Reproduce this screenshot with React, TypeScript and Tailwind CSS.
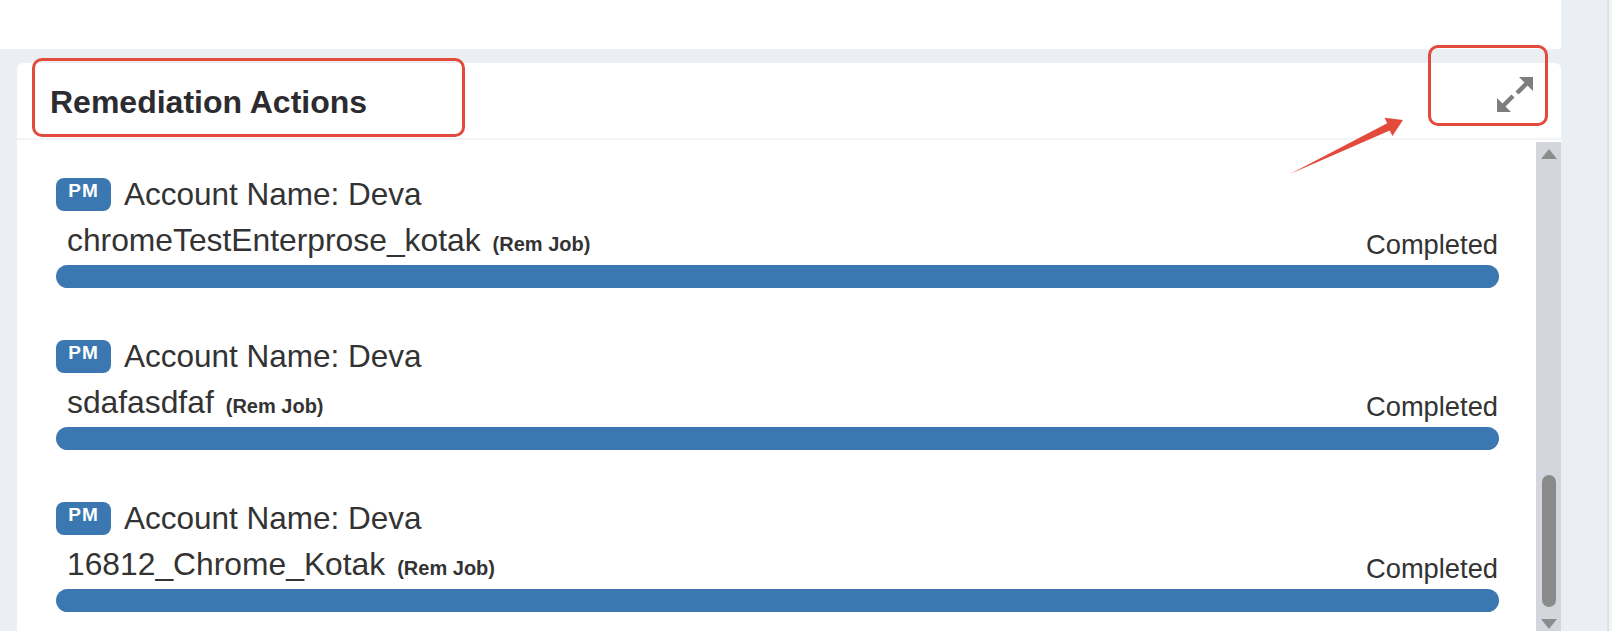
import React from "react";

const items = [
  { name: "chromeTestEnterprose_kotak" },
  { name: "sdafasdfaf" },
  { name: "16812_Chrome_Kotak" },
];

function ExpandIcon() {
  return (
    <svg width="36" height="35" viewBox="0 0 36 35" className="block">
      <polygon points="36,0 36,14 22,0" fill="#7d7d7d" />
      <line x1="30" y1="6" x2="20" y2="16" stroke="#7d7d7d" strokeWidth="4.5" />
      <polygon points="0,35 0,21 14,35" fill="#7d7d7d" />
      <line x1="6" y1="29" x2="16" y2="19" stroke="#7d7d7d" strokeWidth="4.5" />
    </svg>
  );
}

function Item({ name }: { name: string }) {
  return (
    <div className="flex flex-col">
      <div className="flex items-start h-[33px]">
        <div className="w-[55px] h-[33px] rounded-[8px] bg-[#3b78b1] text-white font-bold text-[19px] leading-[19px] pt-[3px] text-center tracking-[1px]">
          PM
        </div>
        <div className="ml-[13px] text-[31.5px] leading-[33px] text-[#333]">
          Account Name: Deva
        </div>
      </div>
      <div className="mt-[11px] flex justify-between h-[36px]">
        <div className="pl-[11px] text-[31.8px] leading-[36px] text-[#333] whitespace-nowrap">
          {name}
          <span className="ml-[12px] text-[20px] font-bold">(Rem Job)</span>
        </div>
        <div className="self-end text-[27.3px] leading-[27px] text-[#333] pr-[1px]">
          Completed
        </div>
      </div>
      <div className="mt-[7px] h-[23px] rounded-full bg-[#3b78b1]" />
    </div>
  );
}

export default function App() {
  return (
    <div
      className="relative w-[1612px] h-[631px] overflow-hidden bg-[#ebeef3] flex"
      style={{ fontFamily: '"Liberation Sans", Arial, sans-serif' }}
    >
      <div className="w-[1561px] flex flex-col">
        <div className="h-[49px] bg-white shrink-0" />
        <div className="h-[14px] shrink-0" />
        <div className="ml-[17px] flex-1 min-h-0 bg-white rounded-t-[6px] flex flex-col">
          <div className="h-[77px] shrink-0 border-b-2 border-[#f2f3f5] flex justify-between items-start">
            <div className="mt-[21px] pl-[33px] text-[32px] leading-[37px] font-bold text-[#2b2b30]">
              Remediation Actions
            </div>
            <div className="mt-[14px] mr-[28px]">
              <ExpandIcon />
            </div>
          </div>
          <div className="flex flex-1 min-h-0">
            <div className="flex-1 pl-[39px] pr-[37px] pt-[38px] overflow-hidden flex flex-col gap-[52px]">
              {items.map((it) => (
                <Item key={it.name} name={it.name} />
              ))}
            </div>
            <div className="w-[25px] mt-[2px] bg-[#d3d6dd] flex flex-col items-center pt-[7px] pb-[2px]">
              <div className="w-0 h-0 border-l-[8px] border-r-[8px] border-b-[10px] border-l-transparent border-r-transparent border-b-[#8c8c8c]" />
              <div className="mt-auto h-[132px] w-[14px] rounded-full bg-[#8a8a8a]" />
              <div className="mt-[12px] w-0 h-0 border-l-[8px] border-r-[8px] border-t-[10px] border-l-transparent border-r-transparent border-t-[#8c8c8c]" />
            </div>
          </div>
        </div>
      </div>
      <div className="w-[46px] bg-[#ebeef3]" />
      <div className="w-[2px] bg-[#dde0e6]" />
      <div className="flex-1 bg-[#f1f3f7]" />

      {/* annotations */}
      <div className="absolute left-[32px] top-[58px] w-[433px] h-[79px] border-[3px] border-[#e24b3b] rounded-[10px] pointer-events-none" />
      <div className="absolute left-[1428px] top-[45px] w-[120px] h-[81px] border-[3px] border-[#e24b3b] rounded-[10px] pointer-events-none" />
      <svg
        className="absolute left-0 top-0 pointer-events-none"
        width="1612"
        height="631"
        viewBox="0 0 1612 631"
      >
        <polygon
          points="1290,174 1389.8,130.6 1392.4,136 1403,120 1384.6,117.8 1387.2,123.2"
          fill="#e24b3b"
        />
      </svg>
    </div>
  );
}
